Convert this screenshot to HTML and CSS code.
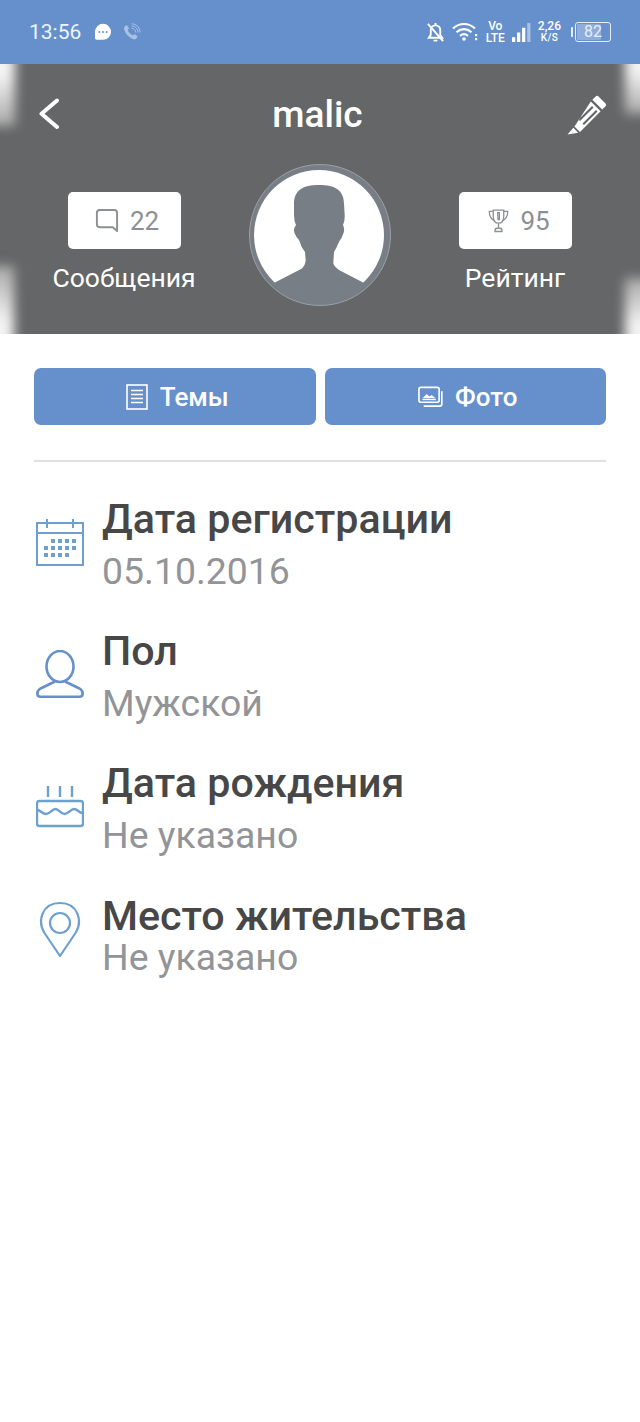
FILE: index.html
```html
<!DOCTYPE html>
<html lang="ru">
<head>
<meta charset="utf-8">
<title>malic</title>
<link rel="stylesheet" href="styles.css">
</head>
<body>
<div class="status">
  <div class="status-left">
    <span class="time">13:56</span>
    <svg class="st-msg" viewBox="0 0 18 18"><path d="M9 .8a8 8 0 0 1 8 8 8 8 0 0 1-8 8H2.600a1.800 1.800 0 0 1-1.600-1.800V8.800a8 8 0 0 1 8-8z" fill="#fff"/><circle cx="5.400" cy="9" r="1" fill="#6690cb"/><circle cx="9" cy="9" r="1" fill="#6690cb"/><circle cx="12.600" cy="9" r="1" fill="#6690cb"/></svg>
    <svg class="st-viber" viewBox="0 0 20 20" fill="none" stroke="#a9c2e4"><path d="M3 3.500 5 2l2.500 3.500L6 7.300c.8 2.600 3 4.800 5.500 5.800l1.700-1.500 3.300 2.600-1.600 2.300c-1 .8-2.400.7-4 0C6.500 14.500 3.700 11 2.300 7c-.5-1.500 0-2.700.7-3.500z" fill="#a9c2e4" stroke="none"/><path d="M10 5.500a4.500 4.500 0 0 1 4.500 4.500M10 3a7 7 0 0 1 7 7M10 .8A9.200 9.200 0 0 1 19.200 10" stroke-width="1"/></svg>
  </div>
  <div class="status-right">
    <svg class="st-bell" viewBox="0 0 20 22" fill="none" stroke="#fff" stroke-width="2"><path d="M5 8.500a5 5 0 0 1 10 0v5l2 3H3l2-3z"/><path d="M8 19.500h4M10 1v2"/><path d="M2 2l16 18"/></svg>
    <svg class="st-wifi" viewBox="0 0 26 20" fill="none" stroke="#fff" stroke-width="2.200"><path d="M1 6.500c6.500-6 15.500-6 22 0M4.500 10.200c4.500-4 10.500-4 15 0M8 13.800c2.500-2 5.500-2 8 0"/><circle cx="12" cy="17" r="1.800" fill="#fff" stroke="none"/><rect x="23" y="12" width="2.200" height="2.200" fill="#fff" stroke="none"/><rect x="23" y="16" width="2.200" height="2.200" fill="#fff" stroke="none"/></svg>
    <span class="volte"><span>Vo</span><span>LTE</span></span>
    <svg class="st-signal" viewBox="0 0 20 20"><rect x="0" y="15" width="3.400" height="5" fill="#fff"/><rect x="5.300" y="10" width="3.400" height="10" fill="#fff"/><rect x="10.600" y="5" width="3.400" height="15" fill="#fff"/><rect x="16" y="0" width="3.400" height="20" fill="#a9c2e4"/></svg>
    <span class="speed"><span class="speed-n">2,26</span><span class="speed-u">K/S</span></span>
    <span class="battery-wrap"><span class="battery-cap"></span><span class="battery"><span class="battery-fill"></span><span class="battery-n">82</span></span></span>
  </div>
</div>

<header class="hero">
  <span class="glow glow-tl"></span><span class="glow glow-tr"></span><span class="glow glow-bl"></span><span class="glow glow-br"></span>
  <div class="nav">
    <svg class="back" viewBox="0 0 22 34" fill="none" stroke="#fff" stroke-width="4" stroke-linecap="round" stroke-linejoin="round"><path d="M19 2.500 3.500 15.700 19 29"/></svg>
    <h1 class="name">malic</h1>
    <svg class="edit" viewBox="0 0 40 40"><path fill="#fff" d="M31.500 1.500 38.500 8.500a2 2 0 0 1 0 2.800l-3.300 3.300-9.800-9.800L28.700 1.500a2 2 0 0 1 2.800 0z"/><path fill="#fff" fill-rule="evenodd" d="M23.800 6.400l9.800 9.800L13 37 7.500 31.500zM25 11 11.500 24.500l1.500 1.500L26.500 12.500zM29 15 15.500 28.500l1.500 1.500L30.500 16.500z"/><path fill="#fff" d="M6.300 32.800l4.900 4.900L.5 39.500z"/></svg>
  </div>
  <div class="stats">
    <div class="stat">
      <div class="stat-box">
        <svg class="ico-chat" viewBox="0 0 26 26" fill="none" stroke="#8c8f93" stroke-width="2"><path d="M6 2h15a3 3 0 0 1 3 3v19l-4.500-4H6a3 3 0 0 1-3-3V5a3 3 0 0 1 3-3z" stroke-linejoin="round"/></svg>
        <span>22</span>
      </div>
      <div class="stat-label">Сообщения</div>
    </div>
    <div class="avatar">
      <svg viewBox="0 0 132 132"><circle cx="66" cy="66" r="65" fill="#fff"/><path fill="#777e85" d="M66 16C50 16 41 21 41 35V46Q41 52 43 56Q40 60 41.500 64Q43 68 46 71Q48 78 52 83L52.700 92Q52 97 49 99.500L20 114.500A67 67 0 0 0 112 114.500L86 101Q80.500 97 80.300 94L81 83Q84 78 86 72.700Q89 69 90.500 64Q92 60 90 56Q92 52 91.700 46L91 35C91 21 82 16 66 16z"/></svg>
    </div>
    <div class="stat">
      <div class="stat-box stat-box-cup">
        <svg class="ico-cup" viewBox="0 0 24 28" fill="none" stroke="#8c8f93" stroke-width="1.500"><path d="M6 1.500h12v7c0 5-2.500 8-6 8s-6-3-6-8z"/><path d="M6 3H1.500c0 5 2 9 6.500 11M18 3h4.500c0 5-2 9-6.500 11"/><path d="M11 4.500h2v8h-1.500zM12 16.500V22M8 26v-1.500c0-1.500 2-2.500 4-2.500s4 1 4 2.500V26z"/></svg>
        <span>95</span>
      </div>
      <div class="stat-label">Рейтинг</div>
    </div>
  </div>
</header>

<main class="content">
  <div class="tabs">
    <button class="tab">
      <svg class="ico-doc" viewBox="0 0 22 26" fill="none" stroke="#fff" stroke-width="1.600"><rect x="1" y="1" width="20" height="24"/><path d="M5 6.500h12M5 10.500h12M5 14.500h12M5 18.500h12"/></svg>
      <span>Темы</span>
    </button>
    <button class="tab">
      <svg class="ico-photo" viewBox="0 0 26 22" fill="none" stroke="#fff" stroke-width="1.700"><rect x="1" y="1" width="21" height="15.500" rx="2"/><path d="M24.800 5v13a2.500 2.500 0 0 1-2.500 2.500H6"/><path d="M4.500 13.500h14" stroke-width="1.500"/><path d="M5 12l4-4 3 2.500 2-1.500 4 3z" fill="#fff" stroke="none"/></svg>
      <span>Фото</span>
    </button>
  </div>
  <hr class="rule">
  <ul class="info">
    <li class="row">
      <svg class="ico" viewBox="0 0 48 48" fill="none" stroke="#6ea0cf" stroke-width="2"><rect x="1" y="5" width="46" height="42"/><path d="M1 15h46M11 1v9M37 1v9"/><g fill="#6ea0cf" stroke="none"><rect x="15" y="21" width="4" height="4"/><rect x="22" y="21" width="4" height="4"/><rect x="29" y="21" width="4" height="4"/><rect x="36" y="21" width="4" height="4"/><rect x="8" y="28" width="4" height="4"/><rect x="15" y="28" width="4" height="4"/><rect x="22" y="28" width="4" height="4"/><rect x="29" y="28" width="4" height="4"/><rect x="36" y="28" width="4" height="4"/><rect x="8" y="35" width="4" height="4"/><rect x="15" y="35" width="4" height="4"/><rect x="22" y="35" width="4" height="4"/><rect x="29" y="35" width="4" height="4"/></g></svg>
      <div class="row-text"><div class="row-title">Дата регистрации</div><div class="row-value">05.10.2016</div></div>
    </li>
    <li class="row">
      <svg class="ico" viewBox="0 0 48 48" fill="none" stroke="#6690cb" stroke-width="2.600" stroke-linejoin="round"><ellipse cx="24" cy="16.500" rx="13.500" ry="15.500"/><path d="M19 31.500 4.500 38.500Q1.300 40.500 1.300 43.500Q1.300 46.700 4.500 46.700H43.500Q46.700 46.700 46.700 43.500Q46.700 40.500 43.500 38.500L29 31.500"/></svg>
      <div class="row-text"><div class="row-title">Пол</div><div class="row-value">Мужской</div></div>
    </li>
    <li class="row">
      <svg class="ico" viewBox="0 0 48 48" fill="none" stroke="#6ea0cf" stroke-width="2.400" stroke-linejoin="round"><rect x="1" y="19" width="46" height="25" rx="2.500"/><path d="M1 28c4 0 5 4 9 4s6-5 9.500-5 5 5 9 5 6-5 9.500-5 5 4 8.500 4"/><path d="M12 4v11M24 4v11M36 4v11"/></svg>
      <div class="row-text"><div class="row-title">Дата рождения</div><div class="row-value">Не указано</div></div>
    </li>
    <li class="row row-tight">
      <svg class="ico ico-pin" viewBox="0 0 48 56" fill="none" stroke="#6ea0cf" stroke-width="2.200" stroke-linejoin="round"><path d="M24 55 8.500 32C1 20 6 2 24 2s23 18 15.500 30z"/><circle cx="24" cy="22" r="10"/></svg>
      <div class="row-text"><div class="row-title">Место жительства</div><div class="row-value">Не указано</div></div>
    </li>
  </ul>
</main>
</body>
</html>
```
FILE: styles.css
```css
* { box-sizing: border-box; }
html, body { margin: 0; padding: 0; }
body { width: 640px; height: 1422px; background: #fff; font-family: Roboto, "Liberation Sans", sans-serif; overflow: hidden; }

.status { height: 64px; background: #6690cb; display: flex; align-items: center; justify-content: space-between; padding: 0 29px 0 29px; color: #fff; }
.status-left { display: flex; align-items: center; }
.status-right { display: flex; align-items: center; }
.time { font-size: 21px; color: #f0f4fa; width: 65px; }
.st-msg { width: 18px; height: 18px; margin-right: 10px; }
.st-viber { width: 19px; height: 19px; }
.st-bell { width: 19px; height: 21px; margin-right: 7px; }
.st-wifi { width: 26px; height: 20px; margin-right: 8px; }
.volte { display: flex; flex-direction: column; align-items: center; font-size: 12px; line-height: 12px; font-weight: 500; margin-right: 7px; }
.st-signal { width: 19px; height: 19px; margin-right: 7px; }
.speed { display: flex; flex-direction: column; align-items: center; font-weight: 500; line-height: 11px; margin-right: 10px; }
.speed-n { font-size: 12px; }
.speed-u { font-size: 10px; letter-spacing: .3px; }
.battery-wrap { display: flex; align-items: center; }
.battery-cap { width: 2px; height: 10px; background: #e8eef7; margin-right: 2px; border-radius: 1px 0 0 1px; }
.battery { position: relative; width: 36px; height: 20px; border: 1.500px solid #e8eef7; border-radius: 3px; display: flex; align-items: center; justify-content: center; }
.battery-fill { position: absolute; left: 1px; top: 1px; bottom: 1px; width: 24px; background: #8eadd9; border-radius: 1px; }
.battery-n { position: relative; font-size: 16px; line-height: 16px; color: #e8eef7; }

.hero { position: relative; height: 270px; background: #656667; overflow: hidden; padding: 28px 33px 0 38px; }
.glow { position: absolute; filter: blur(6px); }
.glow-tl { left: -16px; top: -12px; width: 31px; height: 74px; background: linear-gradient(to bottom, #f4f4f4 30%, #a8a8a8); }
.glow-tr { right: -16px; top: -12px; width: 31px; height: 62px; background: linear-gradient(to bottom, #f4f4f4 30%, #a8a8a8); }
.glow-bl { left: -16px; bottom: -12px; width: 30px; height: 80px; background: linear-gradient(to top, #f4f4f4 30%, #a8a8a8); }
.glow-br { right: -16px; bottom: -12px; width: 31px; height: 68px; background: linear-gradient(to top, #f4f4f4 30%, #a8a8a8); }

.nav { position: relative; display: flex; align-items: center; justify-content: space-between; height: 46px; }
.back { width: 22px; height: 34px; }
.name { margin: 0 0 0 8px; font-size: 37px; line-height: 46px; font-weight: 500; color: #fff; }
.edit { width: 40px; height: 40px; }

.stats { position: relative; display: flex; justify-content: space-between; margin: 26px 21px 0 15px; align-items: flex-start; }
.stat { width: 142px; display: flex; flex-direction: column; align-items: center; }
.stat-box { width: 113px; height: 57px; background: #fff; border-radius: 5px; display: flex; align-items: center; justify-content: center; gap: 11px; font-size: 26px; color: #8c8f93; margin-top: 28px; padding-left: 5px; }
.stat-box-cup { padding-left: 8px; }
.stat-label { font-size: 26.500px; line-height: 30px; font-weight: 400; color: #fff; margin-top: 14px; white-space: nowrap; }
.ico-chat { width: 25px; height: 25px; }
.ico-cup { width: 21px; height: 26px; }
.avatar { width: 142px; height: 142px; border-radius: 50%; border: 1.500px solid #9aa0a5; padding: 3.500px; background: #777e85; }
.avatar svg { display: block; width: 132px; height: 132px; overflow: visible; }

.content { padding: 34px 34px 0; }
.tabs { display: flex; gap: 9px; }
.tab { flex: 1; height: 57px; border: 0; border-radius: 7px; background: #6690cb; color: #fff; font: 500 26px Roboto, "Liberation Sans", sans-serif; display: flex; align-items: center; justify-content: center; gap: 12px; padding: 0 0 0 5px; }
.ico-doc { width: 22px; height: 26px; }
.ico-photo { width: 25px; height: 22px; }
.rule { border: 0; height: 2px; background: #dfe0e2; margin: 35px 0 0; }
.info { list-style: none; margin: 17px 0 0; padding: 0; }
.row { display: flex; align-items: center; height: 132px; }
.row-tight { height: 114px; }
.ico { width: 48px; height: 48px; margin: 0 18px 6px 2px; flex: none; }
.ico-pin { height: 56px; }
.row-text { display: flex; flex-direction: column; }
.row-title { font-size: 41.200px; line-height: 52px; font-weight: 500; color: #474747; }
.row-value { font-size: 37.400px; line-height: 52px; color: #939497; }
.row-tight .row-title { line-height: 51px; }
.row-tight .row-value { line-height: 31px; }
```
